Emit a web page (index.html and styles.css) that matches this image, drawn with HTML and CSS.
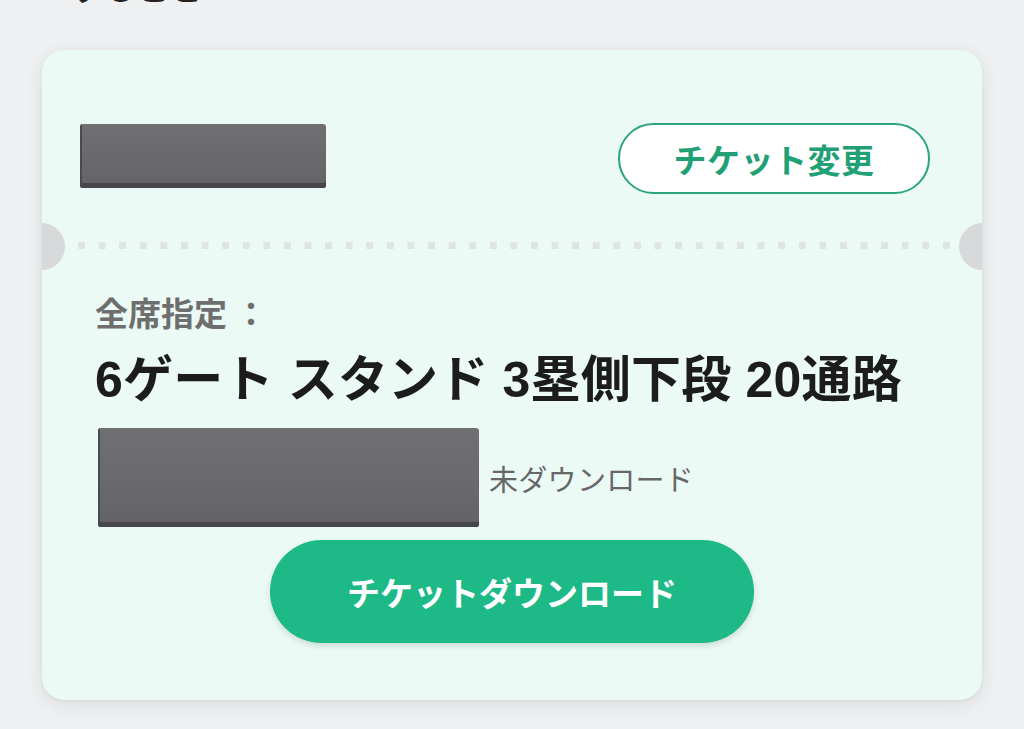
FILE: index.html
```html
<!DOCTYPE html>
<html lang="ja">
<head>
<meta charset="utf-8">
<title>チケット</title>
<link rel="stylesheet" href="styles.css">
</head>
<body>
<div class="page">
  <div class="cut-heading">すること</div>
  <div class="card">
    <span class="notch notch-left"></span>
    <span class="notch notch-right"></span>
    <div class="card-head">
      <div class="redact redact-small"></div>
      <button class="btn-change">チケット変更</button>
    </div>
    <div class="divider"></div>
    <div class="card-body">
      <div class="label">全席指定 ：</div>
      <div class="title">6ゲート スタンド 3塁側下段 20通路</div>
      <div class="status-row">
        <div class="redact redact-large"></div>
        <span class="status">未ダウンロード</span>
      </div>
      <button class="btn-download">チケットダウンロード</button>
    </div>
  </div>
</div>
</body>
</html>
```

FILE: styles.css
```css
html, body {
  margin: 0;
  padding: 0;
  background: #eff0f2;
  height: 100%;
  overflow: hidden;
}
body {
  font-family: "Liberation Sans", "Noto Sans CJK JP", sans-serif;
}
.page {
  width: 1024px;
  height: 729px;
  overflow: hidden;
}
.cut-heading {
  margin-top: -31px;
  padding-left: 70px;
  font-size: 33px;
  line-height: 40px;
  font-weight: 700;
  color: #222;
}
.card {
  position: relative;
  margin: 41px 0 0 42px;
  width: 940px;
  height: 650px;
  border-radius: 22px;
  background: #ebfaf5;
  box-shadow: 0 4px 18px rgba(0, 0, 0, 0.09), 0 1px 3px rgba(0, 0, 0, 0.05);
  overflow: hidden;
}
.notch {
  position: absolute;
  top: 173px;
  width: 47px;
  height: 47px;
  border-radius: 50%;
  background: #d8d9db;
}
.notch-left { left: -24px; }
.notch-right { right: -24px; }
.card-head {
  display: flex;
  justify-content: space-between;
  align-items: flex-start;
  padding: 73px 52px 0 38px;
}
.redact {
  background: linear-gradient(180deg, #707072 0%, #69696b 60%, #636365 100%);
  border-radius: 3px;
  box-shadow: inset 0 -5px 0 #47474b, inset 2px -4px 0 #4a4a55;
}
.redact-small {
  margin-top: 1px;
  width: 246px;
  height: 64px;
}
.btn-change {
  width: 312px;
  height: 71px;
  box-sizing: border-box;
  border: 2px solid #2aa47c;
  border-radius: 36px;
  background: #ffffff;
  color: #22a075;
  font-family: "Noto Sans CJK JP", sans-serif;
  font-size: 33px;
  font-weight: 700;
  padding: 0;
  letter-spacing: 0.5px;
}
.divider {
  margin: 48px 0 0 36px;
  width: 872px;
  height: 7px;
  background-image: linear-gradient(to right, #dee5e3 7px, transparent 7px);
  background-size: 20.6px 7px;
  background-repeat: repeat-x;
}
.card-body {
  padding: 0 53px;
}
.label {
  margin-top: 43px;
  font-family: "Noto Sans CJK JP", sans-serif;
  font-size: 33px;
  line-height: 40px;
  font-weight: 700;
  color: #6e6e6e;
}
.title {
  margin-top: 18px;
  font-size: 50px;
  line-height: 60px;
  font-weight: 700;
  color: #1c1c1c;
  letter-spacing: 0.2px;
  white-space: nowrap;
}
.status-row {
  display: flex;
  align-items: center;
  margin-top: 18px;
}
.redact-large {
  margin-left: 3px;
  width: 381px;
  height: 99px;
}
.status {
  margin-left: 10px;
  font-family: "Noto Sans CJK JP", sans-serif;
  font-size: 29px;
  letter-spacing: 0.3px;
  color: #676767;
}
.btn-download {
  display: block;
  margin: 13px auto 0;
  width: 484px;
  height: 103px;
  border: none;
  border-radius: 52px;
  background: #1db987;
  color: #ffffff;
  font-family: "Noto Sans CJK JP", sans-serif;
  font-size: 33px;
  font-weight: 700;
  padding: 0;
  box-shadow: 0 3px 6px rgba(0, 0, 0, 0.12);
}
```
